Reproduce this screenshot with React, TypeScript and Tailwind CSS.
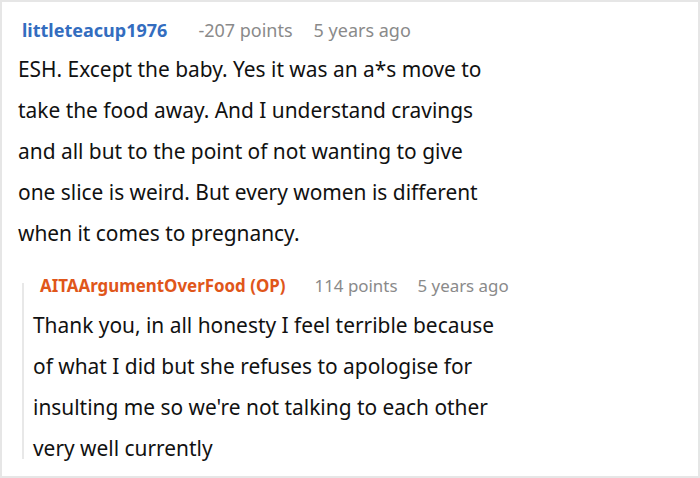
const font = { fontFamily: '"Noto Sans", "Open Sans", sans-serif' }

type CommentHeaderProps = {
  author: string
  authorClass: string
  points: string
  time: string
  small?: boolean
}

const CommentHeader = ({ author, authorClass, points, time, small }: CommentHeaderProps) => (
  <div
    className={`flex items-center h-[24px] leading-[24px] whitespace-nowrap ${
      small ? 'text-[16.9px]' : 'text-[18px]'
    }`}
  >
    <span className={`font-bold ${authorClass}`}>{author}</span>
    <span className={`text-[#8a8a8a] ${small ? 'ml-[29px]' : 'ml-[31px]'}`}>{points}</span>
    <span className={`text-[#8a8a8a] ${small ? 'ml-[20px]' : 'ml-[21px]'}`}>{time}</span>
  </div>
)

const bodyLines = [
  'ESH. Except the baby. Yes it was an a*s move to',
  'take the food away. And I understand cravings',
  'and all but to the point of not wanting to give',
  'one slice is weird. But every women is different',
  'when it comes to pregnancy.',
]

const replyLines = [
  'Thank you, in all honesty I feel terrible because',
  'of what I did but she refuses to apologise for',
  "insulting me so we're not talking to each other",
  'very well currently',
]

const Body = ({ lines, className }: { lines: string[]; className: string }) => (
  <p className={`text-[20.9px] leading-[41px] text-[#111] whitespace-nowrap ${className}`}>
    {lines.map((line, i) => (
      <span key={i} className="block">
        {line}
      </span>
    ))}
  </p>
)

const App = () => {
  return (
    <div
      style={font}
      className="w-[700px] h-[478px] bg-white border-2 border-[#e6e6e6] overflow-hidden"
    >
      <div className="pl-[20px] pt-[16px]">
        <CommentHeader
          author="littleteacup1976"
          authorClass="text-[#336dbf]"
          points="-207 points"
          time="5 years ago"
        />
        <Body lines={bodyLines} className="mt-[7px] -ml-[4px]" />
      </div>

      <div className="flex mt-[20px]">
        <div className="ml-[20px] w-[2px] bg-[#e8e8e8] mt-[9px] h-[176px] shrink-0" />
        <div className="pl-[16px]">
          <CommentHeader
            author="AITAArgumentOverFood (OP)"
            authorClass="text-[#e0561a]"
            points="114 points"
            time="5 years ago"
            small
          />
          <Body lines={replyLines} className="mt-[7px] -ml-[7px]" />
        </div>
      </div>
    </div>
  )
}

export default App
